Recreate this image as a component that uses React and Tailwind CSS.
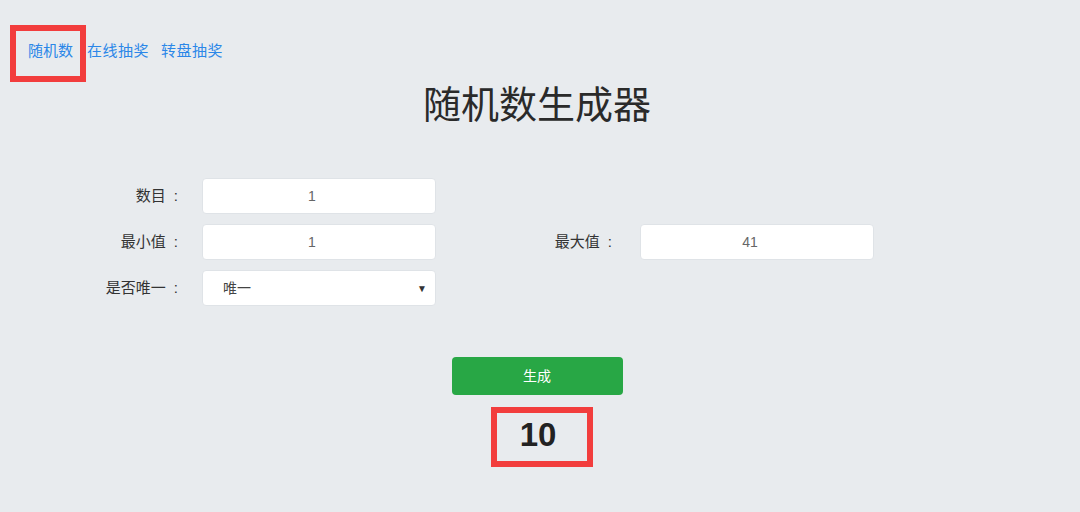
import { useState } from 'react';

const font = { fontFamily: '"Liberation Sans", "Noto Sans CJK SC", sans-serif' };

function Label({ text }) {
  return (
    <label className="flex w-[98px] justify-end text-[15px] text-[#333]">
      {text}
      <span className="ml-[8px]">:</span>
    </label>
  );
}

function Field({ label, value, gap = 'ml-[24px]' }) {
  return (
    <div className="flex items-center">
      <Label text={label} />
      <input
        readOnly
        value={value}
        className={`${gap} h-[36px] w-[234px] rounded-[4px] border border-[#dfe3e7] bg-white pr-[14px] text-center text-[14px] text-[#666] outline-none`}
      />
    </div>
  );
}

export default function App() {
  const [result] = useState(10);

  return (
    <div className="min-h-[512px] w-[1080px] bg-[#e8ebee] pt-[40px]" style={font}>
      {/* nav */}
      <nav className="flex items-center pl-[28px] text-[15px] leading-[22px] text-[#2b87e8]">
        <span className="relative">
          随机数
          <span className="absolute left-[-18px] right-[-13px] top-[-15px] bottom-[-20px] border-[6px] border-[#f23d3d]"></span>
        </span>
        <span className="ml-[14px] tracking-[0.5px]">在线抽奖</span>
        <span className="ml-[12px] tracking-[0.5px]">转盘抽奖</span>
      </nav>

      <h1 className="mt-[20px] pr-[6px] text-center text-[38px] leading-[46px] font-normal text-[#2a2a2a]">
        随机数生成器
      </h1>

      {/* form */}
      <div className="mt-[50px] flex flex-col gap-[10px] pl-[80px]">
        <Field label="数目" value="1" />
        <div className="flex items-center">
          <Field label="最小值" value="1" />
          <div className="ml-[78px]">
            <Field label="最大值" value="41" gap="ml-[28px]" />
          </div>
        </div>
        <div className="flex items-center">
          <Label text="是否唯一" />
          <div className="relative ml-[24px] flex h-[36px] w-[234px] items-center rounded-[4px] border border-[#dfe3e7] bg-white pl-[20px] text-[14px] text-[#444]">
            唯一
            <span className="absolute right-[8px] top-[10px] text-[10px] text-[#333]">▼</span>
          </div>
        </div>
      </div>

      {/* button + result */}
      <div className="mt-[51px] flex flex-col items-center pr-[4px]">
        <button className="ml-[-2px] h-[38px] w-[171px] rounded-[4px] bg-[#28a745] text-[14px] text-white">
          生成
        </button>
        <div className="relative mt-[21px] text-[33px] font-bold leading-[38px] text-[#222]">
          {result}
          <span className="absolute left-[-29px] right-[-37px] top-[-9px] bottom-[-13px] border-[6px] border-[#f23d3d]"></span>
        </div>
      </div>
    </div>
  );
}
